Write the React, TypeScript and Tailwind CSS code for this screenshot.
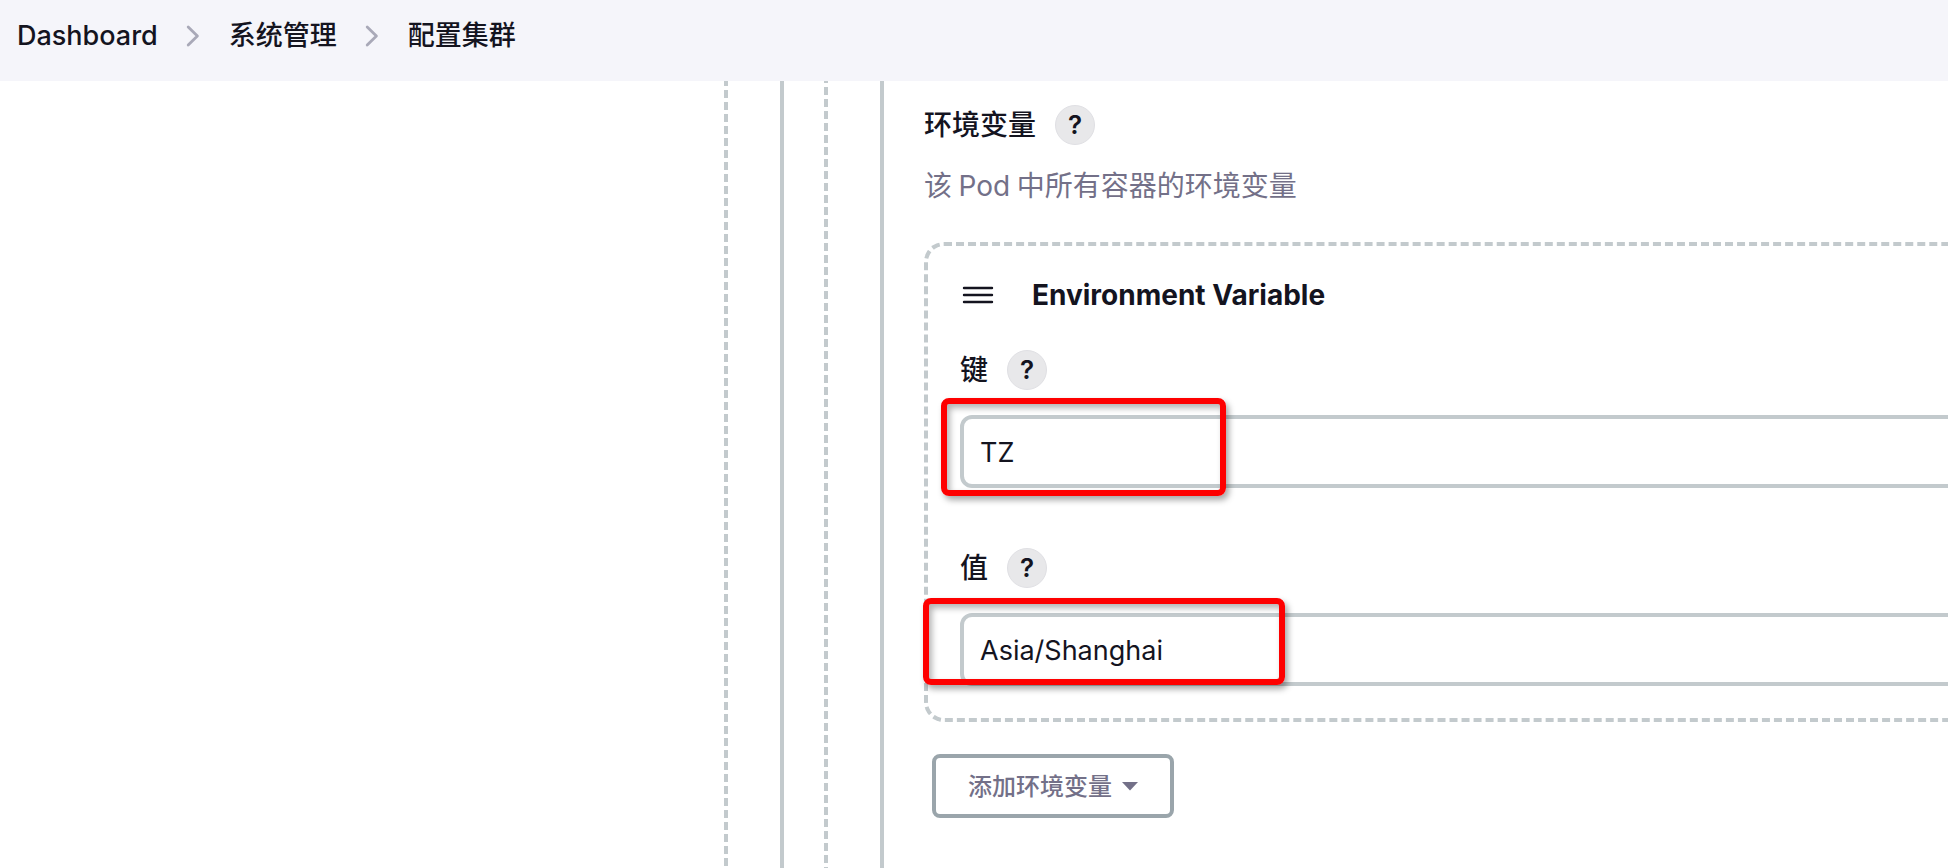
import type { ReactNode } from "react";

function Crumb({ children }: { children: ReactNode }) {
  return <span className="whitespace-nowrap text-[27px] leading-[40px] font-medium">{children}</span>;
}

function Chevron() {
  return (
    <svg className="mt-[9px] mr-[29px] ml-[28px]" width="14" height="22" viewBox="0 0 14 22" fill="none" stroke="#a9a9b8" strokeWidth="2.8" strokeLinecap="round" strokeLinejoin="round">
      <path d="M2.2 2 L11.4 11 L2.2 20" />
    </svg>
  );
}

function Label({ children }: { children: ReactNode }) {
  return (
    <div className="flex h-10 items-center gap-[19px]">
      <span className="text-[28px] leading-10 font-medium whitespace-nowrap">{children}</span>
      <span className="flex size-10 items-center justify-center rounded-full border border-[#e0e0e4] bg-[#e8e8ea] text-[26px] leading-none font-semibold">
        ?
      </span>
    </div>
  );
}

function Field({ value, children }: { value: string; children: ReactNode }) {
  return (
    <div className="relative flex h-[73px] items-center rounded-xl border-4 border-[#c3cacd] bg-white pt-[3px] pl-4 text-[27px]">
      <span className="whitespace-nowrap">{value}</span>
      {children}
    </div>
  );
}

export default function App() {
  return (
    <div className="h-[868px] w-full overflow-hidden bg-white font-['Inter','Noto_Sans_CJK_SC',sans-serif] text-[#14141f]">
      <header className="relative z-10 flex h-[81px] items-start bg-[#f5f5fa] pt-4 pl-[17px]">
        <Crumb>Dashboard</Crumb>
        <Chevron />
        <Crumb>系统管理</Crumb>
        <Chevron />
        <Crumb>配置集群</Crumb>
      </header>
      <div className="-mt-[3px] ml-[724px] h-[800px] border-l-4 border-dashed border-[#c3cacd] pl-[52px]">
        <div className="flow-root h-[800px] border-l-4 border-[#c3cacd] pl-10">
          <div className="-mt-[3px] h-[800px] border-l-4 border-dashed border-[#c3cacd] pl-[52px]">
            <div className="flex h-[800px] flex-col border-l-4 border-[#c3cacd] pt-[30px] pl-10">
              <Label>环境变量</Label>
              <p className="mt-[21px] h-10 text-[28px] leading-10 text-[#737088] [word-spacing:-1.3px]">该 Pod 中所有容器的环境变量</p>
              <section className="mt-9 -mr-10 flex h-[480px] shrink-0 flex-col rounded-[20px] border-4 border-dashed border-[#c3cacd] pt-[29px] pl-8">
                <div className="flex h-10 items-center gap-[38px]">
                  <svg className="ml-0.5" width="32" height="20" viewBox="0 0 32 20" fill="none" stroke="currentColor" strokeWidth="2.4" strokeLinecap="round">
                    <path d="M2 3H30M2 10H30M2 17H30" />
                  </svg>
                  <h3 className="text-[28px] leading-10 font-bold whitespace-nowrap">Environment Variable</h3>
                </div>
                <div className="mt-[35px]">
                  <Label>键</Label>
                </div>
                <div className="mt-[25px]">
                  <Field value="TZ">
                    <span className="absolute -top-[21px] -left-[23px] h-[98px] w-[285px] rounded-lg border-6 border-[#fe0000] shadow-[3px_4px_6px_rgba(0,0,0,0.35),inset_3px_4px_6px_rgba(0,0,0,0.3)]" />
                  </Field>
                </div>
                <div className="mt-[60px]">
                  <Label>值</Label>
                </div>
                <div className="mt-[25px]">
                  <Field value="Asia/Shanghai">
                    <span className="absolute -top-[19px] -left-[41px] h-[87px] w-[362px] rounded-lg border-6 border-[#fe0000] shadow-[3px_4px_6px_rgba(0,0,0,0.35),inset_3px_4px_6px_rgba(0,0,0,0.3)]" />
                  </Field>
                </div>
              </section>
              <button className="mt-8 ml-2 flex h-16 w-[242px] shrink-0 items-center rounded-lg border-4 border-[#9aa5ab] pt-px pl-8 text-[24px] font-medium text-[#737088]">
                <span className="whitespace-nowrap">添加环境变量</span>
                <svg className="ml-2.5" width="16" height="9" viewBox="0 0 16 9" fill="currentColor">
                  <path d="M0 0H16L8 8.5Z" />
                </svg>
              </button>
            </div>
          </div>
        </div>
      </div>
    </div>
  );
}
